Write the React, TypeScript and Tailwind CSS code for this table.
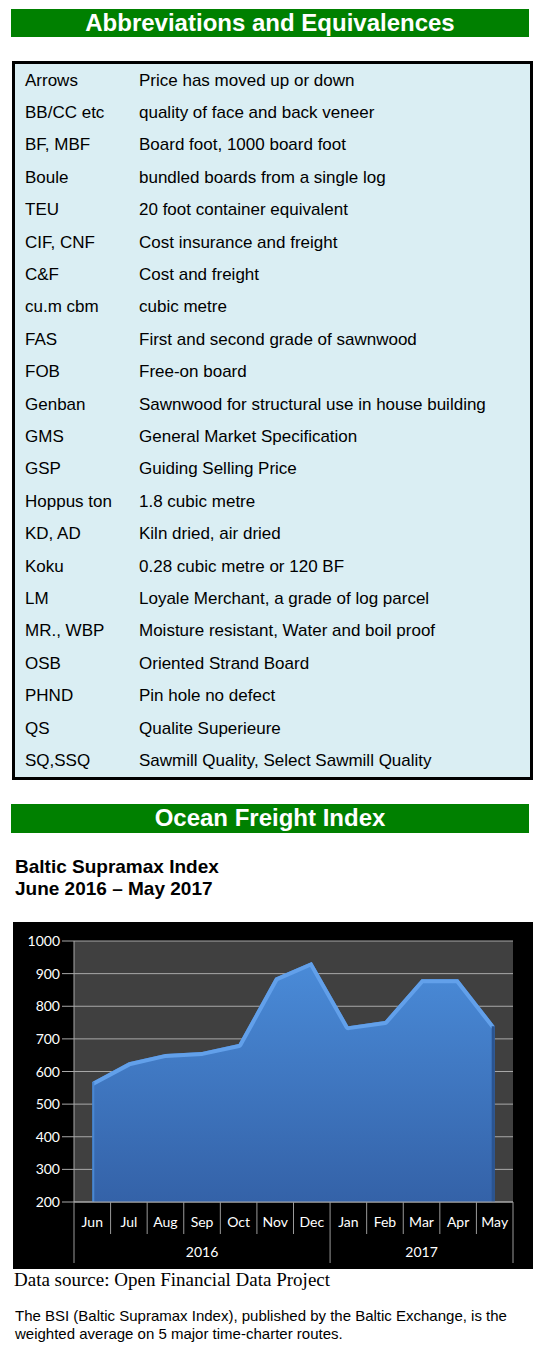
import React from "react";

const rows: [string, string][] = [
  ["Arrows", "Price has moved up or down"],
  ["BB/CC etc", "quality of face and back veneer"],
  ["BF, MBF", "Board foot, 1000 board foot"],
  ["Boule", "bundled boards from a single log"],
  ["TEU", "20 foot container equivalent"],
  ["CIF, CNF", "Cost insurance and freight"],
  ["C&F", "Cost and freight"],
  ["cu.m cbm", "cubic metre"],
  ["FAS", "First and second grade of sawnwood"],
  ["FOB", "Free-on board"],
  ["Genban", "Sawnwood for structural use in house building"],
  ["GMS", "General Market Specification"],
  ["GSP", "Guiding Selling Price"],
  ["Hoppus ton", "1.8 cubic metre"],
  ["KD, AD", "Kiln dried, air dried"],
  ["Koku", "0.28 cubic metre or 120 BF"],
  ["LM", "Loyale Merchant, a grade of log parcel"],
  ["MR., WBP", "Moisture resistant, Water and boil proof"],
  ["OSB", "Oriented Strand Board"],
  ["PHND", "Pin hole no defect"],
  ["QS", "Qualite Superieure"],
  ["SQ,SSQ", "Sawmill Quality, Select Sawmill Quality"],
];

const months = ["Jun", "Jul", "Aug", "Sep", "Oct", "Nov", "Dec", "Jan", "Feb", "Mar", "Apr", "May"];
const values = [568, 628, 654, 660, 684, 887, 936, 739, 755, 883, 883, 739];

// plot geometry (chart-local px)
const L = 61;
const R = 500;
const TOP = 19;
const BASE = 280;
const CW = (R - L) / 12;
const yOf = (v: number) => TOP + ((1000 - v) / 100) * 32.625;
const xOf = (i: number) => L + CW * i + CW / 2;

const SectionBar = ({ title, h }: { title: string; h: string }) => (
  <div className={`ml-[11px] w-[518px] ${h} bg-[#008000] flex items-center justify-center`}>
    <span className="text-[24px] font-bold text-white leading-none">{title}</span>
  </div>
);

const FreightChart = () => {
  const top = values.map((v, i) => `${xOf(i)},${yOf(v)}`).join(" ");
  const area = `${xOf(0)},${BASE} ${top} ${xOf(11)},${BASE}`;
  const ticks = [1000, 900, 800, 700, 600, 500, 400, 300, 200];
  return (
    <svg width="520" height="347" className="block" style={{ fontFamily: "Lato, 'Open Sans', sans-serif" }}>
      <rect x="0" y="0" width="520" height="347" fill="#000" />
      <rect x={L} y={TOP} width={R - L} height={BASE - TOP} fill="#404040" />
      <defs>
        <linearGradient id="areaFill" x1="0" y1="0" x2="0" y2="1">
          <stop offset="0" stopColor="#4a8bd8" />
          <stop offset="1" stopColor="#3462a8" />
        </linearGradient>
        <clipPath id="areaClip">
          <polygon points={area} />
        </clipPath>
      </defs>
      {ticks.map(t => (
        <g key={t}>
          <line x1={49} x2={R} y1={yOf(t)} y2={yOf(t)} stroke="#a8a8a8" strokeWidth="1" />
          <text x={47} y={yOf(t) + 5} fill="#fff" fontSize="14" textAnchor="end">{t}</text>
        </g>
      ))}
      <polygon points={area} fill="url(#areaFill)" />
      <g clipPath="url(#areaClip)">
        <polyline points={top} fill="none" stroke="#62a0ea" strokeWidth="8" strokeLinejoin="round" />
        <line x1={xOf(11)} y1={yOf(739)} x2={xOf(11)} y2={BASE} stroke="#2b5490" strokeWidth="6" />
        <line x1={xOf(0)} y1={yOf(568)} x2={xOf(0)} y2={BASE} stroke="#4a88d2" strokeWidth="4" />
      </g>
      <line x1={L} y1={TOP} x2={L} y2={BASE} stroke="#a8a8a8" strokeWidth="1" />
      <line x1={L} y1={BASE} x2={R} y2={BASE} stroke="#a8a8a8" strokeWidth="1" />
      {months.map((m, i) => (
        <text key={m} x={xOf(i)} y={305} fill="#fff" fontSize="14" textAnchor="middle">{m}</text>
      ))}
      {Array.from({ length: 13 }, (_, i) => {
        const x = L + CW * i;
        const long = i === 0 || i === 7 || i === 12;
        return <line key={i} x1={x} x2={x} y1={BASE} y2={long ? 341 : 312} stroke="#9a9a9a" strokeWidth="1" />;
      })}
      <text x={L + CW * 3.5} y={335} fill="#fff" fontSize="14" textAnchor="middle">2016</text>
      <text x={L + CW * 9.5} y={335} fill="#fff" fontSize="14" textAnchor="middle">2017</text>
    </svg>
  );
};

export default function App() {
  return (
    <div className="w-[551px] h-[1353px] bg-white pt-[9px] text-black" style={{ fontFamily: "'Liberation Sans', Arial, sans-serif" }}>
      <SectionBar title="Abbreviations and Equivalences" h="h-[28px]" />

      <div className="mt-[24px] ml-[12px] w-[521px] border-[3px] border-black bg-[#daeef3]">
        {rows.map(([abbr, desc]) => (
          <div key={abbr} className="h-[32.4px] flex items-center text-[17px] leading-none">
            <div className="w-[124px] pl-[10px] shrink-0">{abbr}</div>
            <div>{desc}</div>
          </div>
        ))}
      </div>

      <div className="mt-[24px]">
        <SectionBar title="Ocean Freight Index" h="h-[29px]" />
      </div>

      <div className="mt-[23px] ml-[15px] text-[19px] font-bold leading-[22px]">
        <div>Baltic Supramax Index</div>
        <div>June 2016 – May 2017</div>
      </div>

      <div className="mt-[22px] ml-[13px]">
        <FreightChart />
      </div>

      <div className="ml-[14px] text-[19px] leading-[22px]" style={{ fontFamily: "'Liberation Serif', 'Times New Roman', serif" }}>
        Data source: Open Financial Data Project
      </div>

      <p className="mt-[16px] ml-[15px] w-[530px] text-[15px] leading-[18px]">
        The BSI (Baltic Supramax Index), published by the Baltic Exchange, is the weighted average on 5 major time-charter routes.
      </p>
    </div>
  );
}
